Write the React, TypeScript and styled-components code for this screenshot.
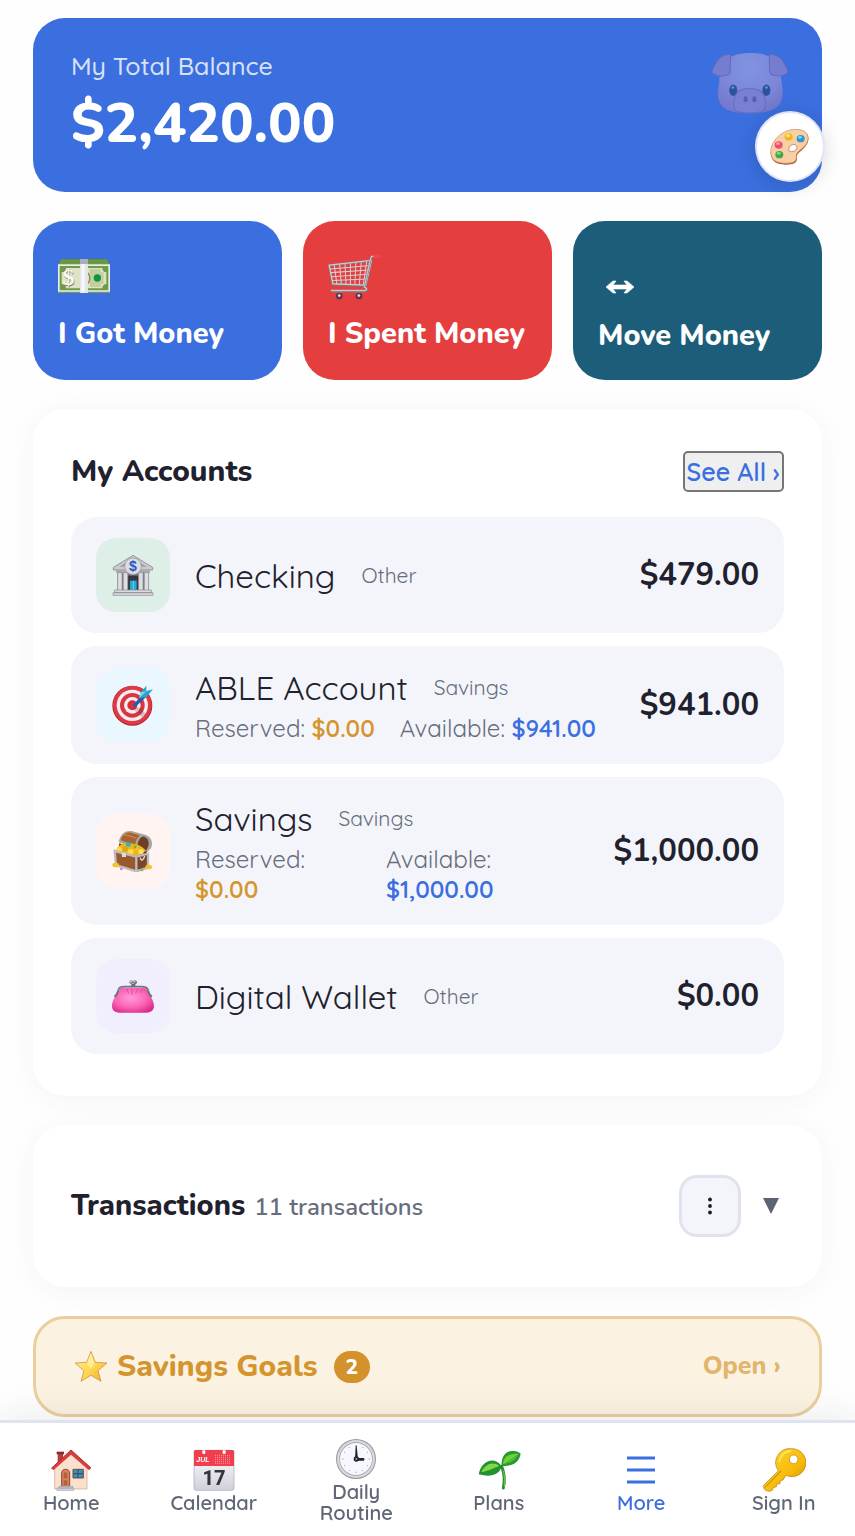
import { ReactNode } from 'react';
import styled, { createGlobalStyle } from 'styled-components';

const display = `Nunito, 'Open Sans', 'Noto Sans', sans-serif`;
const body = `Quicksand, Inter, 'Liberation Sans', sans-serif`;

interface Account {
  name: string;
  type: string;
  amount: string;
  tint: string;
  icon: ReactNode;
  reserved?: string;
  available?: string;
}

const App = () => {
  return (
    <>
      <GlobalStyle />
      <Page>
        <BalanceCard>
          <BalanceLabel>My Total Balance</BalanceLabel>
          <BalanceAmount>$2,420.00</BalanceAmount>
          <PigMark>
            <PigIcon />
          </PigMark>
        </BalanceCard>

        <Actions>
          <ActionButton $color="#3b6fdf">
            <ActionIcon>
              <CashIcon />
            </ActionIcon>
            I Got Money
          </ActionButton>
          <ActionButton $color="#e43e3f">
            <ActionIcon>
              <CartIcon />
            </ActionIcon>
            I Spent Money
          </ActionButton>
          <ActionButton $color="#1c5d7a">
            <ActionIcon $low>
              <MoveIcon />
            </ActionIcon>
            Move Money
          </ActionButton>
        </Actions>

        <AccountsCard>
          <CardHeader>
            <CardTitle>My Accounts</CardTitle>
            <SeeAll type="button">See All ›</SeeAll>
          </CardHeader>
          <AccountList>
            {accounts.map((account) => (
              <AccountRow key={account.name}>
                <AccountIcon $tint={account.tint}>{account.icon}</AccountIcon>
                <AccountInfo>
                  <NameLine>
                    <AccountName>{account.name}</AccountName>
                    <AccountType>{account.type}</AccountType>
                  </NameLine>
                  {account.reserved && (
                    <Details>
                      <span>
                        Reserved: <Value $color="#d4952f">{account.reserved}</Value>
                      </span>
                      <span>
                        Available: <Value $color="#3b6fdf">{account.available}</Value>
                      </span>
                    </Details>
                  )}
                </AccountInfo>
                <AccountAmount>{account.amount}</AccountAmount>
              </AccountRow>
            ))}
          </AccountList>
        </AccountsCard>

        <TransactionsCard>
          <TransactionsHeading>
            <TransactionsTitle>Transactions</TransactionsTitle>
            <Count>11 transactions</Count>
          </TransactionsHeading>
          <MenuButton type="button" aria-label="Transaction options">
            <DotsIcon />
          </MenuButton>
          <ExpandButton type="button" aria-label="Expand transactions">
            <TriangleIcon />
          </ExpandButton>
        </TransactionsCard>

        <GoalsButton type="button">
          <StarIcon />
          <GoalsTitle>Savings Goals</GoalsTitle>
          <Badge>2</Badge>
          <OpenText>Open ›</OpenText>
        </GoalsButton>
      </Page>

      <ThemeButton type="button" aria-label="Change theme">
        <PaletteIcon />
      </ThemeButton>

      <BottomNav>
        {navItems.map((item) => (
          <NavLink href="#" key={item.label} $active={item.active}>
            <NavIcon>{item.icon}</NavIcon>
            <span>{item.label}</span>
          </NavLink>
        ))}
      </BottomNav>
    </>
  );
};

const PigIcon = () => (
  <svg width="76" height="61" viewBox="0 0 226 182">
    <defs>
      <radialGradient id="pig" cx="50%" cy="25%" r="75%">
        <stop offset="0" stopColor="#ffd9e6" />
        <stop offset="0.6" stopColor="#f8b4cd" />
        <stop offset="1" stopColor="#d98aa8" />
      </radialGradient>
    </defs>
    <path
      d="M54 12C75 2 92 0 113 0s42 2 60 12c22 16 32 42 34 74 1 12 5 24 3 40-2 22-14 40-38 46-16 5-38 8-59 8s-43-3-60-8c-24-7-34-24-36-46-1-14 3-28 4-40 2-34 10-60 33-74z"
      fill="url(#pig)"
    />
    <path d="M55 5C38 3 18 14 9 34c-6 12-13 20-7 26 12 11 34 11 46 5 5-2 6-6 6-12z" fill="#e596b5" stroke="#a96a8a" strokeWidth="3" />
    <path d="M171 5c18-2 36 8 45 28 6 12 13 20 7 27-10 10-32 10-44 5-5-2-8-6-8-12z" fill="#e596b5" stroke="#a96a8a" strokeWidth="3" />
    <ellipse cx="63" cy="111" rx="12" ry="17" fill="#12202e" />
    <ellipse cx="162" cy="111" rx="12" ry="17" fill="#12202e" />
    <circle cx="62" cy="103" r="4" fill="#d9d0e0" />
    <circle cx="162" cy="103" r="4" fill="#d9d0e0" />
    <path
      d="M112 106c28 0 44 12 47 36 1 20-4 32-14 34-20 4-46 4-66 0-10-2-16-14-14-34 3-24 19-36 47-36z"
      fill="#f39dba"
      stroke="#a96a8a"
      strokeWidth="3"
    />
    <ellipse cx="100" cy="138" rx="6" ry="9" fill="#8c3f68" />
    <ellipse cx="126" cy="138" rx="6" ry="9" fill="#8c3f68" />
  </svg>
);

const PaletteIcon = () => (
  <svg width="40" height="36" viewBox="0 0 120 108">
    <path
      d="M80 2c24 0 38 12 35 32-2 13-11 23-22 32-10 8-13 11-12 20 1 8-2 17-14 19-22 5-50 2-60-14C-2 74 2 50 20 30 36 12 57 2 80 2z"
      fill="#a85d34"
    />
    <path
      d="M78 1c24 0 38 11 36 30-2 13-10 22-22 31-10 8-14 12-13 20 1 9-3 17-14 19-20 4-46 2-57-12C-3 71 2 48 19 28 35 10 57 1 78 1z"
      fill="#f9cfa5"
      stroke="#c9895b"
      strokeWidth="2"
    />
    <path d="M57 57c2-8 12-13 20-9 6 4 5 12-2 17-7 4-13 4-17 1-2-3-2-6-1-9z" fill="#fff" stroke="#a85d34" strokeWidth="2" />
    <ellipse cx="56" cy="24" rx="12" ry="11" fill="#f0b91a" />
    <ellipse cx="92" cy="29" rx="12" ry="11" fill="#2f97cf" />
    <ellipse cx="26" cy="48" rx="12" ry="11" fill="#ef4d74" />
    <ellipse cx="28" cy="77" rx="12" ry="11" fill="#41a949" />
    <ellipse cx="54" cy="20" rx="6" ry="4" fill="#ffe480" />
    <ellipse cx="90" cy="25" rx="6" ry="4" fill="#8ccdf0" />
    <ellipse cx="24" cy="44" rx="6" ry="4" fill="#ff9ab0" />
    <ellipse cx="26" cy="73" rx="6" ry="4" fill="#8bd588" />
  </svg>
);

const CashIcon = () => (
  <svg width="52" height="34" viewBox="0 0 156 102">
    <path d="M11 0h134l11 17H0z" fill="#5d8f37" />
    <path d="M8 5h140M5 9h146M3 13h150" stroke="#83ad57" strokeWidth="1.5" />
    <path d="M0 16h156v84H0z" fill="#e9efdc" />
    <path d="M0 98h156v4H0z" fill="#7a9468" />
    <path d="M5 21h146v73H5z" fill="#6d9a4b" />
    <path d="M24 27h109c0 8 5 13 12 13v35c-7 0-12 5-12 13H24c0-8-5-13-13-13V40c8 0 13-5 13-13z" fill="#dfe2c4" />
    <path d="M95 30h33v10h9v34h-9v10H95z" fill="#c3cf9f" />
    <circle cx="118" cy="57" r="11" fill="#0c9447" />
    <path d="M85 38c14 10 14 30 0 39" fill="none" stroke="#6d9a4b" strokeWidth="4" />
    <text x="16" y="81" fontFamily="Liberation Serif, serif" fontSize="70" fontWeight="700" fill="#6f7766">$</text>
    <text x="14" y="79" fontFamily="Liberation Serif, serif" fontSize="70" fontWeight="700" fill="#fafaf2">$</text>
    <path d="M66 0h24v102H66z" fill="#e4e4ea" />
    <path d="M66 0h24v15H66z" fill="#abaeba" />
    <path d="M70 15h10v86H70z" fill="#f7f7fa" />
  </svg>
);

const CartIcon = () => (
  <svg width="53" height="48" viewBox="0 -8 156 142">
    <g fill="none" strokeLinejoin="round" strokeLinecap="round">
      <path d="M3 32 128 18 111 92 14 88z" stroke="#81757a" strokeWidth="7" />
      <path d="M3 31 128 17 111 90 14 86z" stroke="#cfc9cc" strokeWidth="4" />
      <path d="M18 31l8 56M34 29l5 58M50 28l3 60M66 26v62M82 24l-3 64M98 23l-6 66M114 21l-10 69" stroke="#d7d0d3" strokeWidth="3" />
      <path d="M6 42l119-10M8 53l114-8M11 65l109-7M13 76l104-4" stroke="#d7d0d3" strokeWidth="3" />
      <path d="M136 6h-8l-4 12-17 78c8 4 10 10 2 12H10" stroke="#7f7378" strokeWidth="7" />
      <path d="M136 5h-8l-4 12-17 78c8 4 10 9 2 11H10" stroke="#cbc4c8" strokeWidth="4" />
      <path d="M138 5h14" stroke="#f0454f" strokeWidth="9" />
    </g>
    <path d="M27 111h12l2 8H25zM84 111h12l2 8H82z" fill="#a49ba0" />
    <circle cx="33" cy="122" r="10" fill="#653449" />
    <circle cx="91" cy="122" r="10" fill="#653449" />
    <circle cx="33" cy="121" r="4" fill="#eedee4" />
    <circle cx="91" cy="121" r="4" fill="#eedee4" />
  </svg>
);

const MoveIcon = () => (
  <svg width="44" height="14" viewBox="0 0 44 14" fill="#fff">
    <path d="M8 7l7-6h3l-3 4h14l-3-4h3l7 6-7 6h-3l3-4H15l3 4h-3z" stroke="#fff" strokeWidth="0.6" />
  </svg>
);

const BankIcon = () => (
  <svg width="42" height="42" viewBox="0 0 126 126">
    <path d="M4 40 63 4l59 36v8H4z" fill="#c9c9ce" stroke="#77777d" strokeWidth="2" />
    <path d="M22 38 63 13l41 25z" fill="#9b9ba1" />
    <path d="M12 48h102v8H12z" fill="#aaaab0" />
    <path d="M16 56h94v54H16z" fill="#77777d" />
    <path d="M48 65h31v45H48z" fill="#35383f" />
    <path d="M54 80h20v30H54z" fill="#27a9d6" />
    <path d="M64 80v30" stroke="#8be1f4" strokeWidth="2" />
    <path d="M17 56h13v54H17zM34 56h13v54H34zM80 56h13v54H80zM97 56h13v54H97z" fill="#dedee2" stroke="#8e8e94" strokeWidth="2" />
    <path d="M8 108h110v8H8zM3 116h120v8H3z" fill="#dadade" stroke="#88888e" strokeWidth="2" />
    <circle cx="63" cy="37" r="25" fill="#dcdce1" stroke="#93939a" strokeWidth="2" />
    <text x="63" y="52" textAnchor="middle" fontFamily="Liberation Sans, sans-serif" fontSize="42" fontWeight="700" fill="#2457c4">$</text>
  </svg>
);

const TargetIcon = () => (
  <svg width="42" height="42" viewBox="0 0 126 126">
    <circle cx="61" cy="65" r="60" fill="#b9202b" />
    <circle cx="61" cy="64" r="58" fill="#dd3a45" />
    <circle cx="61" cy="64" r="47" fill="#f7eef0" />
    <circle cx="61" cy="64" r="37" fill="#d93641" />
    <circle cx="61" cy="64" r="25" fill="#f7eef0" />
    <circle cx="61" cy="64" r="15" fill="#d52f3b" />
    <path d="M65 70l19 1 18 20-12 9-21-20z" fill="#5a3036" opacity="0.25" />
    <path d="M62 63l32-33 9 8-34 32z" fill="#235fae" />
    <path d="M85 26 103 5v16l20-5-20 23-21 4z" fill="#28a7ce" />
    <path d="M103 21 85 26l-3 16 21-21z" fill="#7cdcea" />
  </svg>
);

const ChestIcon = () => (
  <svg width="42" height="42" viewBox="0 0 126 126">
    <path d="M20 36C26 10 40 1 58 3l44 12c17 6 22 24 15 40l-12 12-10-4z" fill="#a9a5a4" />
    <path d="M26 31C32 12 44 6 56 8l28 8C74 24 70 34 70 47z" fill="#a9632f" />
    <path d="M76 49c1-16 10-31 20-29 12 3 18 18 11 33l-5 9z" fill="#6e3f24" />
    <path d="M36 14c10 1 24 6 37 11" stroke="#cf9666" strokeWidth="3" fill="none" />
    <path d="M22 40 104 64l-2 12H16z" fill="#483321" />
    <path d="M13 60c9-20 23-20 34-20 19-1 44 6 55 23l-29 18-54-13z" fill="#eeb41b" />
    <circle cx="22" cy="59" r="8" fill="#ffd73e" />
    <circle cx="40" cy="57" r="8" fill="#dfa514" />
    <circle cx="56" cy="66" r="9" fill="#ffd944" />
    <circle cx="72" cy="55" r="7" fill="#f5c321" />
    <circle cx="87" cy="65" r="8" fill="#ffe05c" />
    <path d="M42 36l16 3-4 11-12-2z" fill="#2ab3d4" />
    <path d="M65 46l10 4-7 7z" fill="#41b45c" />
    <path d="M8 63l65 17v44L12 105z" fill="#9a592d" />
    <path d="M73 80l35-9v42l-35 11z" fill="#7b4526" />
    <path d="M8 63l65 17v44L12 105zM73 80l35-9v42l-35 11" fill="none" stroke="#bdbbbb" strokeWidth="7" />
    <path d="M29 68h13v13H30z" fill="#dcdcde" />
    <path d="M85 83c2 12 9 9 13-5" fill="none" stroke="#ddd" strokeWidth="4" />
    <ellipse cx="11" cy="105" rx="10" ry="7" fill="#f1c428" />
    <ellipse cx="110" cy="111" rx="10" ry="7" fill="#f1c428" />
    <circle cx="28" cy="117" r="4" fill="#cc80cf" />
    <circle cx="90" cy="120" r="4" fill="#78b86b" />
  </svg>
);

const PurseIcon = () => (
  <svg width="42" height="33" viewBox="0 0 126 99">
    <defs>
      <radialGradient id="purse" cx="45%" cy="40%" r="65%">
        <stop offset="0" stopColor="#ff9bd5" />
        <stop offset="0.6" stopColor="#fb62b6" />
        <stop offset="1" stopColor="#dd2f8a" />
      </radialGradient>
    </defs>
    <path d="M23 24h80c6 20 23 34 23 53 0 14-8 21-27 21H27C8 98 0 91 0 77c0-19 17-33 23-53z" fill="url(#purse)" />
    <path d="M44 27l6 13M60 27v17M78 27l-7 13M90 28l-6 10" stroke="#cf3689" strokeWidth="2" />
    <path d="M7 50c10-4 9-14 13-22 2-7 8-8 17-8h52c9 0 15 1 18 8 3 8 3 18 13 22" fill="none" stroke="#73717f" strokeWidth="6" />
    <path d="M20 32c2-7 8-9 17-9h52c9 0 14 2 17 9" fill="none" stroke="#bab7c3" strokeWidth="2" />
    <circle cx="58" cy="7" r="6" fill="#92909c" />
    <circle cx="69" cy="7" r="6" fill="#777582" />
    <path d="M58 12h12v8H58z" fill="#6d6b78" />
    <circle cx="57" cy="5" r="2" fill="#eee" />
    <circle cx="68" cy="5" r="2" fill="#eee" />
  </svg>
);

const DotsIcon = () => (
  <svg width="6" height="18" viewBox="0 0 6 18" fill="#1a1d29">
    <circle cx="3" cy="2.5" r="1.9" />
    <circle cx="3" cy="9" r="1.9" />
    <circle cx="3" cy="15.5" r="1.9" />
  </svg>
);

const TriangleIcon = () => (
  <svg width="16" height="16" viewBox="0 0 16 16">
    <path d="M0 0h16L8 16z" fill="#5b6475" />
  </svg>
);

const StarIcon = () => (
  <svg width="34" height="32" viewBox="0 0 102 96">
    <defs>
      <linearGradient id="star" x1="0" y1="0" x2="1" y2="1">
        <stop offset="0" stopColor="#ffe99a" />
        <stop offset="0.5" stopColor="#ffdc56" />
        <stop offset="1" stopColor="#efa426" />
      </linearGradient>
    </defs>
    <path d="M51 1l13 33 35 2-27 23 9 32-30-18-30 18 9-32L3 36l35-2z" fill="url(#star)" stroke="#c48333" strokeWidth="2" strokeLinejoin="round" />
    <path d="M51 6l10 30-10 18-12-18z" fill="#fff6bc" opacity="0.6" />
  </svg>
);

const HouseIcon = () => (
  <svg width="42" height="42" viewBox="0 0 126 126">
    <path d="M23 11h16v30H23z" fill="#b83c38" />
    <path d="M20 8h22v8H20z" fill="#872c2d" />
    <path d="M14 57 62 12l49 45v63H14z" fill="#fae0cd" stroke="#c8a08c" strokeWidth="2" />
    <path d="M4 58 63 3l60 54-6 7-54-47L10 64z" fill="#d93e3f" />
    <path d="M4 58 63 3l60 54" fill="none" stroke="#a92f34" strokeWidth="3" />
    <path d="M35 112V72c0-15 24-15 24 0v40z" fill="#d78159" stroke="#864d3a" strokeWidth="3" />
    <path d="M41 75c0-7 11-7 11 0v13H41zM41 94h11v14H41z" fill="#b7603f" />
    <path d="M69 61h31v26H69z" fill="#438dae" stroke="#6c4b48" strokeWidth="3" />
    <path d="M84 61v26M69 74h31" stroke="#254f70" strokeWidth="3" />
    <path d="M27 112h41v5H27zM21 117h50v7H21z" fill="#d9dce7" stroke="#9599a5" strokeWidth="2" />
  </svg>
);

const CalendarIcon = () => (
  <svg width="42" height="42" viewBox="0 0 126 126">
    <defs>
      <linearGradient id="page" x1="0" y1="0" x2="0" y2="1">
        <stop offset="0" stopColor="#fff" />
        <stop offset="1" stopColor="#d0d0dc" />
      </linearGradient>
    </defs>
    <rect x="3" y="4" width="120" height="120" rx="6" fill="url(#page)" stroke="#a6a6b4" strokeWidth="2" />
    <path d="M3 51V8c0-3 2-5 5-5h20v9c0 4 9 4 9 0V3h52v9c0 4 9 4 9 0V3h20c3 0 5 2 5 5v43z" fill="#f03e4f" />
    <text x="10" y="40" fontFamily="Liberation Sans, sans-serif" fontSize="21" fontStyle="italic" fontWeight="700" fill="#fff">JUL</text>
    <path d="M66 19h48M66 25h48M66 31h48M66 37h48M66 43h48" stroke="#ff9a9c" strokeWidth="3" strokeDasharray="3 3" />
    <text x="63" y="108" textAnchor="middle" fontFamily="Roboto, sans-serif" fontSize="60" fontWeight="800" fill="#36363a">17</text>
  </svg>
);

const ClockIcon = () => (
  <svg width="42" height="42" viewBox="0 0 126 126">
    <circle cx="63" cy="63" r="60" fill="#97979c" />
    <circle cx="63" cy="63" r="57" fill="#d9d9dd" />
    <circle cx="63" cy="63" r="50" fill="#9d9da3" />
    <circle cx="63" cy="63" r="48" fill="#f7f7ff" />
    <path d="M63 21v4M84 27l-2 3M99 42l-3 2M105 63h-4M99 84l-3-2M84 99l-2-3M63 105v-4M42 99l2-3M27 84l3-2M21 63h4M27 42l3 2M42 27l2 3" stroke="#777781" strokeWidth="2" />
    <path d="M62 23h3l4 40h-9zM66 60h20l3 4-3 4H66z" fill="#25252b" />
    <circle cx="64" cy="63" r="8" fill="#25252b" />
    <circle cx="64" cy="63" r="3" fill="#a3a3aa" />
  </svg>
);

const SproutIcon = () => (
  <svg width="44" height="40" viewBox="0 0 132 120">
    <path d="M74 49c8 20 10 43 5 65" fill="none" stroke="#279332" strokeWidth="9" strokeLinecap="round" />
    <path d="M79 62c4 17 5 34 3 49" fill="none" stroke="#69c847" strokeWidth="3" />
    <path d="M74 48C72 20 86 2 108 3c13 0 19 5 23 8-3 20-18 39-57 37z" fill="#239b2e" />
    <path d="M78 43C78 22 95 9 125 12c-12 20-27 27-47 31z" fill="#70cf3b" />
    <path d="M74 48C57 26 34 27 18 45 8 56 7 66 5 73c35 9 63 3 69-25z" fill="#219330" />
    <path d="M67 48C48 33 25 42 13 66c23-2 36-11 54-18z" fill="#84d744" />
    <path d="M10 70c24-3 41-17 63-22 17-7 33-23 52-34" fill="none" stroke="#278d29" strokeWidth="2" />
  </svg>
);

const LinesIcon = () => (
  <svg width="28" height="28" viewBox="0 0 28 28">
    <path d="M0 2h28M0 14h28M0 26h28" stroke="#3b6fdf" strokeWidth="3" />
  </svg>
);

const KeyIcon = () => (
  <svg width="44" height="44" viewBox="0 0 132 132">
    <defs>
      <linearGradient id="key" x1="0" y1="0" x2="1" y2="1">
        <stop offset="0" stopColor="#ffdc32" />
        <stop offset="0.6" stopColor="#f7b90a" />
        <stop offset="1" stopColor="#cc8900" />
      </linearGradient>
    </defs>
    <path
      fillRule="evenodd"
      d="M88 2a42 42 0 1 1-16 80l-9 14-8 2-1 9-9 1-2 8-9 3-3 8-9 3c-12-1-19-7-17-18l44-44A42 42 0 0 1 88 2zm7 19a13 13 0 1 0 0 26 13 13 0 0 0 0-26z"
      fill="url(#key)"
      stroke="#b77d0a"
      strokeWidth="2"
    />
    <path d="M9 118l48-49" stroke="#bd7a00" strokeWidth="3" />
    <path d="M52 42c2-18 17-33 35-33" stroke="#ffeb78" strokeWidth="4" fill="none" />
  </svg>
);

const accounts: Account[] = [
  {
    name: 'Checking',
    type: 'Other',
    amount: '$479.00',
    tint: '#deefe8',
    icon: <BankIcon />
  },
  {
    name: 'ABLE Account',
    type: 'Savings',
    amount: '$941.00',
    tint: '#ebf7ff',
    icon: <TargetIcon />,
    reserved: '$0.00',
    available: '$941.00'
  },
  {
    name: 'Savings',
    type: 'Savings',
    amount: '$1,000.00',
    tint: '#fff4f2',
    icon: <ChestIcon />,
    reserved: '$0.00',
    available: '$1,000.00'
  },
  {
    name: 'Digital Wallet',
    type: 'Other',
    amount: '$0.00',
    tint: '#f1effe',
    icon: <PurseIcon />
  }
];

const navItems = [
  { label: 'Home', icon: <HouseIcon /> },
  { label: 'Calendar', icon: <CalendarIcon /> },
  { label: 'Daily Routine', icon: <ClockIcon /> },
  { label: 'Plans', icon: <SproutIcon /> },
  { label: 'More', icon: <LinesIcon />, active: true },
  { label: 'Sign In', icon: <KeyIcon /> }
];

const GlobalStyle = createGlobalStyle`
  * {
    box-sizing: border-box;
  }

  body {
    margin: 0;
    background: #fefefe;
    color: #1f222e;
    font-family: ${body};
  }

  button {
    font-family: inherit;
    cursor: pointer;
  }

  svg {
    display: block;
    flex-shrink: 0;
  }
`;

const Page = styled.main`
  display: flex;
  flex-direction: column;
  gap: 29px;
  padding: 18px 33px 118px;
`;

const BalanceCard = styled.section`
  position: relative;
  padding: 31px 38px 27px;
  border-radius: 32px;
  background: #3b6fdf;
  color: #fff;
`;

const BalanceLabel = styled.p`
  margin: 0;
  font-size: 25px;
  font-weight: 500;
  line-height: 34px;
  opacity: 0.8;
`;

const BalanceAmount = styled.p`
  margin: 0;
  font-family: ${display};
  font-size: 56px;
  font-weight: 800;
  line-height: 82px;
`;

const PigMark = styled.div`
  position: absolute;
  top: 35px;
  right: 34px;
  opacity: 0.35;
`;

const Actions = styled.div`
  display: grid;
  grid-template-columns: repeat(3, 1fr);
  gap: 21px;
`;

const ActionButton = styled.button.attrs({ type: 'button' })<{ $color: string }>`
  display: flex;
  flex-direction: column;
  align-items: flex-start;
  gap: 16px;
  padding: 30px 25px 26px;
  border: 0;
  border-radius: 32px;
  background: ${(props) => props.$color};
  color: #fff;
  font-family: ${display};
  font-size: 29px;
  font-weight: 800;
  line-height: 36px;
  white-space: nowrap;
`;

const ActionIcon = styled.span<{ $low?: boolean }>`
  display: flex;
  align-items: ${(props) => (props.$low ? 'flex-end' : 'center')};
  height: ${(props) => (props.$low ? '51px' : '49px')};
  padding-bottom: ${(props) => (props.$low ? '8px' : '0')};
`;

const Card = styled.section`
  border-radius: 32px;
  background: #fff;
  box-shadow: 0 4px 28px rgba(30, 50, 50, 0.05);
`;

const AccountsCard = styled(Card)`
  padding: 42px 38px;
`;

const CardHeader = styled.div`
  display: flex;
  align-items: center;
  justify-content: space-between;
  margin-bottom: 25px;
`;

const CardTitle = styled.h2`
  margin: 0;
  font-family: ${display};
  font-size: 30px;
  font-weight: 800;
  line-height: 38px;
`;

const SeeAll = styled.button`
  padding: 2px;
  border: 2px solid #767676;
  border-radius: 5px;
  background: #efefef;
  color: #3b6fdf;
  font-size: 25px;
  font-weight: 600;
  line-height: 33px;
`;

const AccountList = styled.ul`
  display: flex;
  flex-direction: column;
  gap: 13px;
  margin: 0;
  padding: 0;
  list-style: none;
`;

const AccountRow = styled.li`
  display: flex;
  align-items: center;
  gap: 25px;
  padding: 21px 25px;
  border-radius: 26px;
  background: #f4f5fb;
`;

const AccountIcon = styled.div<{ $tint: string }>`
  display: flex;
  flex-shrink: 0;
  align-items: center;
  justify-content: center;
  width: 74px;
  height: 74px;
  border-radius: 20px;
  background: ${(props) => props.$tint};
`;

const AccountInfo = styled.div`
  display: flex;
  flex: 1;
  flex-direction: column;
  gap: 5px;
  min-width: 0;
`;

const NameLine = styled.div`
  display: flex;
  align-items: center;
  gap: 26px;
  line-height: 41px;
`;

const AccountName = styled.span`
  font-size: 33px;
  font-weight: 400;
`;

const AccountType = styled.span`
  color: #666e7d;
  font-size: 21px;
`;

const Details = styled.div`
  display: flex;
  gap: 25px;
  color: #666e7d;
  font-size: 24px;
  font-weight: 400;
  line-height: 30px;
`;

const Value = styled.strong<{ $color: string }>`
  color: ${(props) => props.$color};
  font-weight: 600;
`;

const AccountAmount = styled.span`
  font-family: ${display};
  font-size: 31px;
  font-weight: 700;
`;

const TransactionsCard = styled(Card)`
  display: flex;
  align-items: center;
  padding: 50px 43px 50px 38px;
`;

const TransactionsHeading = styled.div`
  display: flex;
  flex: 1;
  align-items: baseline;
  gap: 9px;
`;

const TransactionsTitle = styled(CardTitle)`
  font-size: 29px;
`;

const Count = styled.span`
  color: #666e7d;
  font-family: ${display};
  font-size: 24px;
  font-weight: 600;
`;

const MenuButton = styled.button`
  display: flex;
  align-items: center;
  justify-content: center;
  width: 62px;
  height: 62px;
  border: 3px solid #e0e3ee;
  border-radius: 18px;
  background: #f4f5fb;
`;

const ExpandButton = styled.button`
  display: flex;
  margin-left: 22px;
  padding: 0;
  border: 0;
  background: none;
`;

const GoalsButton = styled.button`
  display: flex;
  align-items: center;
  padding: 28px 38px;
  border: 3px solid #eacf9d;
  border-radius: 32px;
  background: #fcf2e1;
  color: #d4952f;
  font-family: ${display};
  line-height: 39px;
`;

const GoalsTitle = styled.span`
  margin: 0 16px 0 9px;
  font-size: 30px;
  font-weight: 800;
`;

const Badge = styled.span`
  padding: 0 12px;
  border-radius: 17px;
  background: #d4922c;
  color: #fff;
  font-size: 21px;
  font-weight: 800;
  line-height: 32px;
`;

const OpenText = styled.span`
  margin-left: auto;
  font-size: 25px;
  font-weight: 800;
  opacity: 0.65;
`;

const ThemeButton = styled.button`
  position: fixed;
  top: 111px;
  right: 30px;
  display: flex;
  align-items: center;
  justify-content: center;
  width: 70px;
  height: 71px;
  border: 2px solid #dfe5f8;
  border-radius: 50%;
  background: #fff;
  box-shadow: 0 4px 20px rgba(0, 0, 0, 0.15);
`;

const BottomNav = styled.nav`
  position: fixed;
  right: 0;
  bottom: 0;
  left: 0;
  display: grid;
  grid-template-columns: repeat(6, 1fr);
  height: 116px;
  border-top: 3px solid #dfe3ef;
  background: #fff;
  box-shadow: 0 -6px 32px rgba(30, 40, 60, 0.08);
`;

const NavLink = styled.a<{ $active?: boolean }>`
  display: flex;
  flex-direction: column;
  align-items: center;
  justify-content: center;
  padding: 1px 24px 0;
  color: ${(props) => (props.$active ? '#3b6fdf' : '#5f6675')};
  font-size: 20px;
  font-weight: 600;
  line-height: 21px;
  text-align: center;
  text-decoration: none;
`;

const NavIcon = styled.span`
  display: flex;
  align-items: center;
  height: 44px;
`;

export default App;
